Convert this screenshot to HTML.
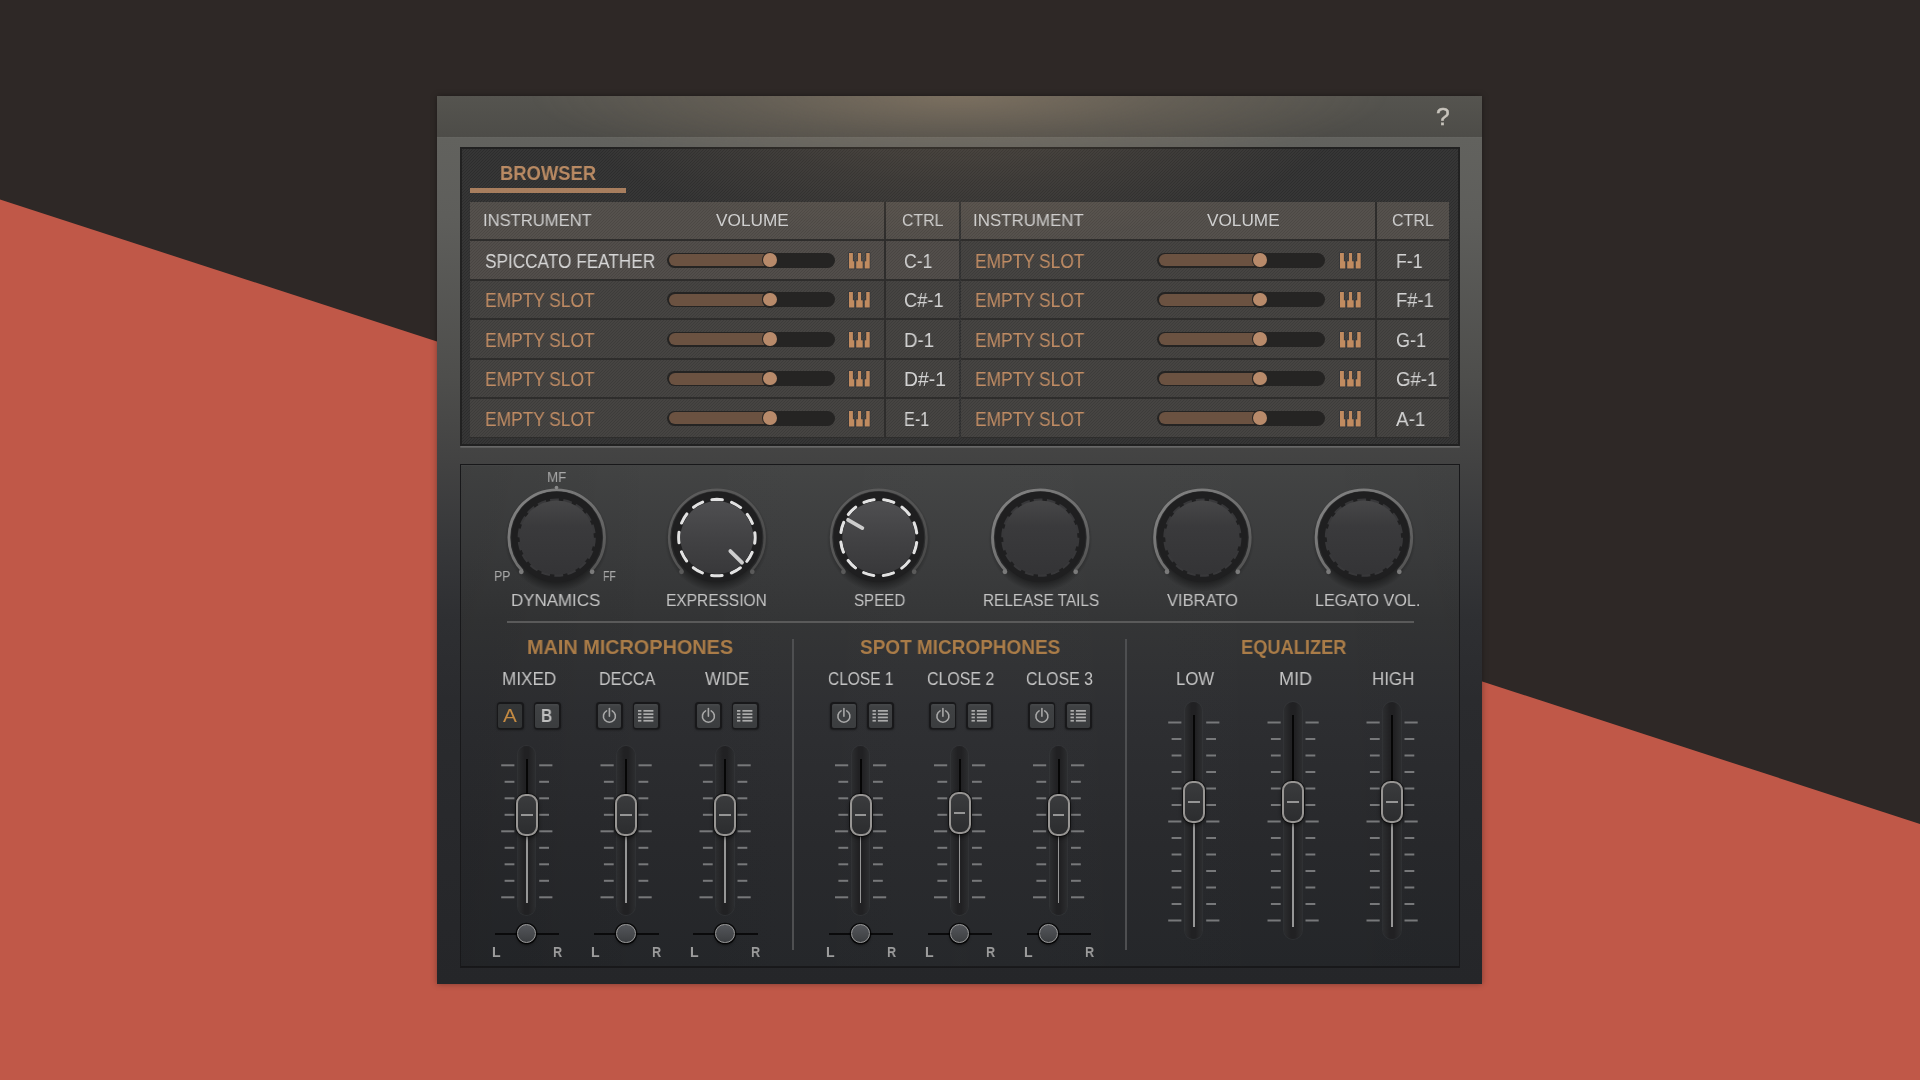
<!DOCTYPE html>
<html lang="en"><head><meta charset="utf-8"><title>Mixer</title>
<style>
html,body{margin:0;padding:0;}
body{width:1920px;height:1080px;overflow:hidden;background:#2e2826;position:relative;
font-family:"Liberation Sans",sans-serif;}
.a{position:absolute;}
.t{position:absolute;white-space:nowrap;line-height:30px;transform-origin:0 50%;will-change:transform;}
svg{position:absolute;overflow:visible;}
.stripe{background-image:linear-gradient(135deg,rgba(255,255,255,0.03) 25%,rgba(0,0,0,0.04) 25%,rgba(0,0,0,0.04) 50%,rgba(255,255,255,0.03) 50%,rgba(255,255,255,0.03) 75%,rgba(0,0,0,0.04) 75%);background-size:3px 3px;}
</style></head><body>

<svg class="a" style="left:0;top:0" width="1920" height="1080"><polygon points="0,199.5 1920,823.9 1920,1080 0,1080" fill="#c05848"/></svg>
<div class="a" id="panel" style="left:437px;top:96px;width:1045px;height:887.6px;background:linear-gradient(to bottom,#575651 0,#575651 40px,#6a6a66 40.5px,#62625e 42px,#5e5e5b 120px,#4e4e4c 280px,#424242 369px,#37383a 445px,#2e2f32 524px,#2a2b2e 604px,#252629 888px);box-shadow:0 0 6px rgba(0,0,0,0.35);"></div>
<div class="a" style="left:437px;top:96px;width:1045px;height:40.5px;background:linear-gradient(to bottom,#55544f,#4d4c48);"></div>
<div class="t" style="left:1435.60px;top:102.18px;font-size:24.01px;color:#c8c4bc;transform:scaleX(1.0277);-webkit-text-stroke:0.45px #c8c4bc;">?</div>
<div class="a" style="left:437px;top:96px;width:1045px;height:260px;background:radial-gradient(ellipse 430px 78px at 50% 0,rgba(190,160,125,0.36),rgba(190,160,125,0.15) 50%,rgba(190,160,125,0) 100%);"></div>
<div class="a stripe" style="left:460px;top:147px;width:999.5px;height:298.5px;box-sizing:border-box;background-color:#2f2f2f;border:2px solid #212121;box-shadow:0 2px 0 -0.3px rgba(255,255,255,0.19);"></div>
<div class="t" style="left:499.81px;top:158.16px;font-size:19.75px;color:#b98a63;font-weight:bold;transform:scaleX(0.9304);">BROWSER</div>
<div class="a" style="left:470px;top:188.3px;width:156px;height:5.2px;background:#a87e5e;"></div>
<div class="a" style="left:470px;top:202px;width:488.6px;height:235.5px;background:#2e2d2c;"></div>
<div class="a stripe" style="left:470px;top:202px;width:414px;height:37.19999999999999px;background-color:#4f4b47;"></div>
<div class="a stripe" style="left:470px;top:241.20px;width:414px;height:37.5px;background-color:#4c4845;"></div>
<div class="a stripe" style="left:470px;top:280.70px;width:414px;height:37.5px;background-color:#403e3c;"></div>
<div class="a stripe" style="left:470px;top:320.20px;width:414px;height:37.5px;background-color:#403e3c;"></div>
<div class="a stripe" style="left:470px;top:359.70px;width:414px;height:37.5px;background-color:#403e3c;"></div>
<div class="a stripe" style="left:470px;top:399.20px;width:414px;height:37.5px;background-color:#403e3c;"></div>
<div class="a stripe" style="left:886px;top:202px;width:72.60000000000002px;height:37.19999999999999px;background-color:#4f4b47;"></div>
<div class="a stripe" style="left:886px;top:241.20px;width:72.60000000000002px;height:37.5px;background-color:#4c4845;"></div>
<div class="a stripe" style="left:886px;top:280.70px;width:72.60000000000002px;height:37.5px;background-color:#403e3c;"></div>
<div class="a stripe" style="left:886px;top:320.20px;width:72.60000000000002px;height:37.5px;background-color:#403e3c;"></div>
<div class="a stripe" style="left:886px;top:359.70px;width:72.60000000000002px;height:37.5px;background-color:#403e3c;"></div>
<div class="a stripe" style="left:886px;top:399.20px;width:72.60000000000002px;height:37.5px;background-color:#403e3c;"></div>
<div class="a" style="left:960.6px;top:202px;width:488.4px;height:235.5px;background:#2e2d2c;"></div>
<div class="a stripe" style="left:960.6px;top:202px;width:414.1px;height:37.19999999999999px;background-color:#4f4b47;"></div>
<div class="a stripe" style="left:960.6px;top:241.20px;width:414.1px;height:37.5px;background-color:#403e3c;"></div>
<div class="a stripe" style="left:960.6px;top:280.70px;width:414.1px;height:37.5px;background-color:#403e3c;"></div>
<div class="a stripe" style="left:960.6px;top:320.20px;width:414.1px;height:37.5px;background-color:#403e3c;"></div>
<div class="a stripe" style="left:960.6px;top:359.70px;width:414.1px;height:37.5px;background-color:#403e3c;"></div>
<div class="a stripe" style="left:960.6px;top:399.20px;width:414.1px;height:37.5px;background-color:#403e3c;"></div>
<div class="a stripe" style="left:1376.7px;top:202px;width:72.29999999999995px;height:37.19999999999999px;background-color:#4f4b47;"></div>
<div class="a stripe" style="left:1376.7px;top:241.20px;width:72.29999999999995px;height:37.5px;background-color:#403e3c;"></div>
<div class="a stripe" style="left:1376.7px;top:280.70px;width:72.29999999999995px;height:37.5px;background-color:#403e3c;"></div>
<div class="a stripe" style="left:1376.7px;top:320.20px;width:72.29999999999995px;height:37.5px;background-color:#403e3c;"></div>
<div class="a stripe" style="left:1376.7px;top:359.70px;width:72.29999999999995px;height:37.5px;background-color:#403e3c;"></div>
<div class="a stripe" style="left:1376.7px;top:399.20px;width:72.29999999999995px;height:37.5px;background-color:#403e3c;"></div>
<div class="t" style="left:482.90px;top:205.71px;font-size:17.01px;color:#cfcfcf;transform:scaleX(0.9763);">INSTRUMENT</div>
<div class="t" style="left:972.65px;top:205.71px;font-size:17.01px;color:#cfcfcf;transform:scaleX(0.9942);">INSTRUMENT</div>
<div class="t" style="left:716.35px;top:205.71px;font-size:17.01px;color:#cfcfcf;transform:scaleX(1.0143);">VOLUME</div>
<div class="t" style="left:1206.85px;top:205.71px;font-size:17.01px;color:#cfcfcf;transform:scaleX(1.0115);">VOLUME</div>
<div class="t" style="left:901.65px;top:205.71px;font-size:17.01px;color:#cfcfcf;transform:scaleX(0.9312);">CTRL</div>
<div class="t" style="left:1391.85px;top:205.71px;font-size:17.01px;color:#cfcfcf;transform:scaleX(0.9402);">CTRL</div>
<div class="t" style="left:484.63px;top:245.85px;font-size:19.34px;color:#d6d6d6;transform:scaleX(0.8905);">SPICCATO FEATHER</div>
<div class="t" style="left:974.73px;top:245.85px;font-size:19.34px;color:#c08c64;transform:scaleX(0.8958);">EMPTY SLOT</div>
<div class="a" style="left:667px;top:252.60px;width:168.0px;height:15.0px;border-radius:8px;background:#252423;"></div>
<div class="a" style="left:668.5px;top:254.10px;width:103.0px;height:12.0px;border-radius:6px;background:#6b5241;"></div>
<div class="a" style="left:761.80px;top:251.90px;width:16.4px;height:16.4px;border-radius:50%;background:#262423;"></div>
<div class="a" style="left:763.10px;top:253.20px;width:13.8px;height:13.8px;border-radius:50%;background:#b88a6a;"></div>
<div class="a" style="left:1157.2px;top:252.60px;width:168.0px;height:15.0px;border-radius:8px;background:#252423;"></div>
<div class="a" style="left:1158.7px;top:254.10px;width:103.0px;height:12.0px;border-radius:6px;background:#6b5241;"></div>
<div class="a" style="left:1252.00px;top:251.90px;width:16.4px;height:16.4px;border-radius:50%;background:#262423;"></div>
<div class="a" style="left:1253.30px;top:253.20px;width:13.8px;height:13.8px;border-radius:50%;background:#b88a6a;"></div>
<svg style="left:849.4000000000001px;top:252.65px" width="21" height="16" viewBox="0 0 21 16"><g fill="#c08b60" stroke="#2f3338" stroke-opacity="0.85" stroke-width="1.3" paint-order="stroke" stroke-linejoin="round"><path d="M0,0 h3.9 v8.3 h1.4 v7.3 h-5.3 z"/><path d="M8.9,0 h3.2 v8.3 h1.6 v7.3 h-6.5 v-7.3 h1.7 z"/><path d="M17.2,0 h3.5 v15.6 h-5 v-7.3 h1.5 z"/></g></svg>
<svg style="left:1339.6000000000001px;top:252.65px" width="21" height="16" viewBox="0 0 21 16"><g fill="#c08b60" stroke="#2f3338" stroke-opacity="0.85" stroke-width="1.3" paint-order="stroke" stroke-linejoin="round"><path d="M0,0 h3.9 v8.3 h1.4 v7.3 h-5.3 z"/><path d="M8.9,0 h3.2 v8.3 h1.6 v7.3 h-6.5 v-7.3 h1.7 z"/><path d="M17.2,0 h3.5 v15.6 h-5 v-7.3 h1.5 z"/></g></svg>
<div class="t" style="left:904.00px;top:245.85px;font-size:19.34px;color:#d2d2d2;transform:scaleX(0.9080);">C-1</div>
<div class="t" style="left:1396.00px;top:245.85px;font-size:19.34px;color:#d2d2d2;transform:scaleX(0.9168);">F-1</div>
<div class="t" style="left:484.63px;top:285.35px;font-size:19.34px;color:#c08c64;transform:scaleX(0.8979);">EMPTY SLOT</div>
<div class="t" style="left:974.73px;top:285.35px;font-size:19.34px;color:#c08c64;transform:scaleX(0.8958);">EMPTY SLOT</div>
<div class="a" style="left:667px;top:292.10px;width:168.0px;height:15.0px;border-radius:8px;background:#252423;"></div>
<div class="a" style="left:668.5px;top:293.60px;width:103.0px;height:12.0px;border-radius:6px;background:#6b5241;"></div>
<div class="a" style="left:761.80px;top:291.40px;width:16.4px;height:16.4px;border-radius:50%;background:#262423;"></div>
<div class="a" style="left:763.10px;top:292.70px;width:13.8px;height:13.8px;border-radius:50%;background:#b88a6a;"></div>
<div class="a" style="left:1157.2px;top:292.10px;width:168.0px;height:15.0px;border-radius:8px;background:#252423;"></div>
<div class="a" style="left:1158.7px;top:293.60px;width:103.0px;height:12.0px;border-radius:6px;background:#6b5241;"></div>
<div class="a" style="left:1252.00px;top:291.40px;width:16.4px;height:16.4px;border-radius:50%;background:#262423;"></div>
<div class="a" style="left:1253.30px;top:292.70px;width:13.8px;height:13.8px;border-radius:50%;background:#b88a6a;"></div>
<svg style="left:849.4000000000001px;top:292.15px" width="21" height="16" viewBox="0 0 21 16"><g fill="#c08b60" stroke="#2f3338" stroke-opacity="0.85" stroke-width="1.3" paint-order="stroke" stroke-linejoin="round"><path d="M0,0 h3.9 v8.3 h1.4 v7.3 h-5.3 z"/><path d="M8.9,0 h3.2 v8.3 h1.6 v7.3 h-6.5 v-7.3 h1.7 z"/><path d="M17.2,0 h3.5 v15.6 h-5 v-7.3 h1.5 z"/></g></svg>
<svg style="left:1339.6000000000001px;top:292.15px" width="21" height="16" viewBox="0 0 21 16"><g fill="#c08b60" stroke="#2f3338" stroke-opacity="0.85" stroke-width="1.3" paint-order="stroke" stroke-linejoin="round"><path d="M0,0 h3.9 v8.3 h1.4 v7.3 h-5.3 z"/><path d="M8.9,0 h3.2 v8.3 h1.6 v7.3 h-6.5 v-7.3 h1.7 z"/><path d="M17.2,0 h3.5 v15.6 h-5 v-7.3 h1.5 z"/></g></svg>
<div class="t" style="left:904.00px;top:285.35px;font-size:19.34px;color:#d2d2d2;transform:scaleX(0.9422);">C#-1</div>
<div class="t" style="left:1396.00px;top:285.35px;font-size:19.34px;color:#d2d2d2;transform:scaleX(0.9530);">F#-1</div>
<div class="t" style="left:484.63px;top:324.85px;font-size:19.34px;color:#c08c64;transform:scaleX(0.8979);">EMPTY SLOT</div>
<div class="t" style="left:974.73px;top:324.85px;font-size:19.34px;color:#c08c64;transform:scaleX(0.8958);">EMPTY SLOT</div>
<div class="a" style="left:667px;top:331.60px;width:168.0px;height:15.0px;border-radius:8px;background:#252423;"></div>
<div class="a" style="left:668.5px;top:333.10px;width:103.0px;height:12.0px;border-radius:6px;background:#6b5241;"></div>
<div class="a" style="left:761.80px;top:330.90px;width:16.4px;height:16.4px;border-radius:50%;background:#262423;"></div>
<div class="a" style="left:763.10px;top:332.20px;width:13.8px;height:13.8px;border-radius:50%;background:#b88a6a;"></div>
<div class="a" style="left:1157.2px;top:331.60px;width:168.0px;height:15.0px;border-radius:8px;background:#252423;"></div>
<div class="a" style="left:1158.7px;top:333.10px;width:103.0px;height:12.0px;border-radius:6px;background:#6b5241;"></div>
<div class="a" style="left:1252.00px;top:330.90px;width:16.4px;height:16.4px;border-radius:50%;background:#262423;"></div>
<div class="a" style="left:1253.30px;top:332.20px;width:13.8px;height:13.8px;border-radius:50%;background:#b88a6a;"></div>
<svg style="left:849.4000000000001px;top:331.65px" width="21" height="16" viewBox="0 0 21 16"><g fill="#c08b60" stroke="#2f3338" stroke-opacity="0.85" stroke-width="1.3" paint-order="stroke" stroke-linejoin="round"><path d="M0,0 h3.9 v8.3 h1.4 v7.3 h-5.3 z"/><path d="M8.9,0 h3.2 v8.3 h1.6 v7.3 h-6.5 v-7.3 h1.7 z"/><path d="M17.2,0 h3.5 v15.6 h-5 v-7.3 h1.5 z"/></g></svg>
<svg style="left:1339.6000000000001px;top:331.65px" width="21" height="16" viewBox="0 0 21 16"><g fill="#c08b60" stroke="#2f3338" stroke-opacity="0.85" stroke-width="1.3" paint-order="stroke" stroke-linejoin="round"><path d="M0,0 h3.9 v8.3 h1.4 v7.3 h-5.3 z"/><path d="M8.9,0 h3.2 v8.3 h1.6 v7.3 h-6.5 v-7.3 h1.7 z"/><path d="M17.2,0 h3.5 v15.6 h-5 v-7.3 h1.5 z"/></g></svg>
<div class="t" style="left:904.00px;top:324.85px;font-size:19.34px;color:#d2d2d2;transform:scaleX(0.9626);">D-1</div>
<div class="t" style="left:1396.00px;top:324.85px;font-size:19.34px;color:#d2d2d2;transform:scaleX(0.9335);">G-1</div>
<div class="t" style="left:484.63px;top:364.35px;font-size:19.34px;color:#c08c64;transform:scaleX(0.8979);">EMPTY SLOT</div>
<div class="t" style="left:974.73px;top:364.35px;font-size:19.34px;color:#c08c64;transform:scaleX(0.8958);">EMPTY SLOT</div>
<div class="a" style="left:667px;top:371.10px;width:168.0px;height:15.0px;border-radius:8px;background:#252423;"></div>
<div class="a" style="left:668.5px;top:372.60px;width:103.0px;height:12.0px;border-radius:6px;background:#6b5241;"></div>
<div class="a" style="left:761.80px;top:370.40px;width:16.4px;height:16.4px;border-radius:50%;background:#262423;"></div>
<div class="a" style="left:763.10px;top:371.70px;width:13.8px;height:13.8px;border-radius:50%;background:#b88a6a;"></div>
<div class="a" style="left:1157.2px;top:371.10px;width:168.0px;height:15.0px;border-radius:8px;background:#252423;"></div>
<div class="a" style="left:1158.7px;top:372.60px;width:103.0px;height:12.0px;border-radius:6px;background:#6b5241;"></div>
<div class="a" style="left:1252.00px;top:370.40px;width:16.4px;height:16.4px;border-radius:50%;background:#262423;"></div>
<div class="a" style="left:1253.30px;top:371.70px;width:13.8px;height:13.8px;border-radius:50%;background:#b88a6a;"></div>
<svg style="left:849.4000000000001px;top:371.15px" width="21" height="16" viewBox="0 0 21 16"><g fill="#c08b60" stroke="#2f3338" stroke-opacity="0.85" stroke-width="1.3" paint-order="stroke" stroke-linejoin="round"><path d="M0,0 h3.9 v8.3 h1.4 v7.3 h-5.3 z"/><path d="M8.9,0 h3.2 v8.3 h1.6 v7.3 h-6.5 v-7.3 h1.7 z"/><path d="M17.2,0 h3.5 v15.6 h-5 v-7.3 h1.5 z"/></g></svg>
<svg style="left:1339.6000000000001px;top:371.15px" width="21" height="16" viewBox="0 0 21 16"><g fill="#c08b60" stroke="#2f3338" stroke-opacity="0.85" stroke-width="1.3" paint-order="stroke" stroke-linejoin="round"><path d="M0,0 h3.9 v8.3 h1.4 v7.3 h-5.3 z"/><path d="M8.9,0 h3.2 v8.3 h1.6 v7.3 h-6.5 v-7.3 h1.7 z"/><path d="M17.2,0 h3.5 v15.6 h-5 v-7.3 h1.5 z"/></g></svg>
<div class="t" style="left:904.00px;top:364.35px;font-size:19.34px;color:#d2d2d2;transform:scaleX(0.9899);">D#-1</div>
<div class="t" style="left:1396.00px;top:364.35px;font-size:19.34px;color:#d2d2d2;transform:scaleX(0.9628);">G#-1</div>
<div class="t" style="left:484.63px;top:403.85px;font-size:19.34px;color:#c08c64;transform:scaleX(0.8979);">EMPTY SLOT</div>
<div class="t" style="left:974.73px;top:403.85px;font-size:19.34px;color:#c08c64;transform:scaleX(0.8958);">EMPTY SLOT</div>
<div class="a" style="left:667px;top:410.60px;width:168.0px;height:15.0px;border-radius:8px;background:#252423;"></div>
<div class="a" style="left:668.5px;top:412.10px;width:103.0px;height:12.0px;border-radius:6px;background:#6b5241;"></div>
<div class="a" style="left:761.80px;top:409.90px;width:16.4px;height:16.4px;border-radius:50%;background:#262423;"></div>
<div class="a" style="left:763.10px;top:411.20px;width:13.8px;height:13.8px;border-radius:50%;background:#b88a6a;"></div>
<div class="a" style="left:1157.2px;top:410.60px;width:168.0px;height:15.0px;border-radius:8px;background:#252423;"></div>
<div class="a" style="left:1158.7px;top:412.10px;width:103.0px;height:12.0px;border-radius:6px;background:#6b5241;"></div>
<div class="a" style="left:1252.00px;top:409.90px;width:16.4px;height:16.4px;border-radius:50%;background:#262423;"></div>
<div class="a" style="left:1253.30px;top:411.20px;width:13.8px;height:13.8px;border-radius:50%;background:#b88a6a;"></div>
<svg style="left:849.4000000000001px;top:410.65px" width="21" height="16" viewBox="0 0 21 16"><g fill="#c08b60" stroke="#2f3338" stroke-opacity="0.85" stroke-width="1.3" paint-order="stroke" stroke-linejoin="round"><path d="M0,0 h3.9 v8.3 h1.4 v7.3 h-5.3 z"/><path d="M8.9,0 h3.2 v8.3 h1.6 v7.3 h-6.5 v-7.3 h1.7 z"/><path d="M17.2,0 h3.5 v15.6 h-5 v-7.3 h1.5 z"/></g></svg>
<svg style="left:1339.6000000000001px;top:410.65px" width="21" height="16" viewBox="0 0 21 16"><g fill="#c08b60" stroke="#2f3338" stroke-opacity="0.85" stroke-width="1.3" paint-order="stroke" stroke-linejoin="round"><path d="M0,0 h3.9 v8.3 h1.4 v7.3 h-5.3 z"/><path d="M8.9,0 h3.2 v8.3 h1.6 v7.3 h-6.5 v-7.3 h1.7 z"/><path d="M17.2,0 h3.5 v15.6 h-5 v-7.3 h1.5 z"/></g></svg>
<div class="t" style="left:904.00px;top:403.85px;font-size:19.34px;color:#d2d2d2;transform:scaleX(0.8405);">E-1</div>
<div class="t" style="left:1396.00px;top:403.85px;font-size:19.34px;color:#d2d2d2;transform:scaleX(0.9767);">A-1</div>
<div class="a" style="left:460px;top:147px;width:999.5px;height:120px;background:radial-gradient(ellipse 400px 150px at 50% -51px,rgba(200,165,125,0.20),rgba(200,165,125,0.07) 60%,rgba(200,165,125,0) 100%);"></div>
<div class="a" style="left:459.5px;top:464px;width:1000.5px;height:504px;box-sizing:border-box;border:1.5px solid #18181a;border-bottom-width:2px;background:linear-gradient(to bottom,#434444 0,#3a3b3c 90px,#333435 155px,#2d2e31 250px,#28292c 380px,#242629 503px);"></div>
<div class="a" style="left:461.0px;top:465.5px;width:997.5px;height:501px;background:linear-gradient(to right,rgba(0,0,0,0.07),rgba(0,0,0,0) 20%,rgba(255,255,255,0.012) 50%,rgba(0,0,0,0) 85%,rgba(0,0,0,0.03));"></div>
<svg class="a" style="left:0;top:0" width="1920" height="1080"><defs><linearGradient id="capA" x1="0" y1="0" x2="0" y2="1"><stop offset="0" stop-color="#474748"/><stop offset="0.35" stop-color="#3a3a3c"/><stop offset="1" stop-color="#343436"/></linearGradient><linearGradient id="capB" x1="0" y1="0" x2="0" y2="1"><stop offset="0" stop-color="#4f4f51"/><stop offset="0.5" stop-color="#424244"/><stop offset="1" stop-color="#38383a"/></linearGradient><linearGradient id="arcL" x1="0" y1="0" x2="1" y2="1"><stop offset="0" stop-color="#868686"/><stop offset="0.6" stop-color="#6c6c6c"/><stop offset="1" stop-color="#505050"/></linearGradient><linearGradient id="arcD" x1="0" y1="0" x2="1" y2="1"><stop offset="0" stop-color="#606060"/><stop offset="1" stop-color="#484848"/></linearGradient><radialGradient id="ksh" cx="0.5" cy="0.5" r="0.5"><stop offset="0.8" stop-color="#000" stop-opacity="0.45"/><stop offset="1" stop-color="#000" stop-opacity="0"/></radialGradient></defs>
<circle cx="556.7" cy="539.6" r="52" fill="url(#ksh)"/>
<path d="M522.32,570.80 A47.8,47.8 0 1 1 591.08,570.80" fill="none" stroke="url(#arcL)" stroke-width="2.8"/>
<circle cx="521.31" cy="571.78" r="2.4" fill="#7a7a7a"/>
<circle cx="592.09" cy="571.78" r="2.4" fill="#7a7a7a"/>
<circle cx="556.7" cy="536.8000000000001" r="45.3" fill="#1f1f20"/>
<circle cx="556.7" cy="537.6" r="37.8" fill="none" stroke="#38383a" stroke-width="2.6" stroke-dasharray="8.8 4.39" transform="rotate(-100 556.7 537.6)"/>
<circle cx="556.7" cy="537.6" r="37.2" fill="url(#capA)"/>
<circle cx="716.9" cy="539.6" r="52" fill="url(#ksh)"/>
<path d="M682.52,570.80 A47.8,47.8 0 1 1 751.28,570.80" fill="none" stroke="url(#arcD)" stroke-width="2.4"/>
<circle cx="681.51" cy="571.78" r="2.4" fill="#5a5a5a"/>
<circle cx="752.29" cy="571.78" r="2.4" fill="#5a5a5a"/>
<circle cx="716.9" cy="536.8000000000001" r="45.3" fill="#1f1f20"/>
<circle cx="716.9" cy="537.6" r="38.2" fill="none" stroke="#e2e2e2" stroke-width="3.1" stroke-linecap="round" stroke-dasharray="10.401 9.601" transform="rotate(52.20 716.9 537.6)"/>
<circle cx="716.9" cy="537.6" r="36.5" fill="url(#capB)"/>
<path d="M730.34,551.04 L742.00,562.70" stroke="#cdcdcd" stroke-width="3.8" stroke-linecap="round"/>
<circle cx="878.8" cy="539.6" r="52" fill="url(#ksh)"/>
<path d="M844.42,570.80 A47.8,47.8 0 1 1 913.18,570.80" fill="none" stroke="url(#arcD)" stroke-width="2.4"/>
<circle cx="843.41" cy="571.78" r="2.4" fill="#5a5a5a"/>
<circle cx="914.19" cy="571.78" r="2.4" fill="#5a5a5a"/>
<circle cx="878.8" cy="536.8000000000001" r="45.3" fill="#1f1f20"/>
<circle cx="878.8" cy="537.6" r="38.2" fill="none" stroke="#e2e2e2" stroke-width="3.1" stroke-linecap="round" stroke-dasharray="10.401 9.601" transform="rotate(-142.80 878.8 537.6)"/>
<circle cx="878.8" cy="537.6" r="36.5" fill="url(#capB)"/>
<path d="M862.35,528.10 L848.06,519.85" stroke="#cdcdcd" stroke-width="3.8" stroke-linecap="round"/>
<circle cx="1040.3" cy="539.6" r="52" fill="url(#ksh)"/>
<path d="M1005.92,570.80 A47.8,47.8 0 1 1 1074.68,570.80" fill="none" stroke="url(#arcL)" stroke-width="2.8"/>
<circle cx="1004.91" cy="571.78" r="2.4" fill="#7a7a7a"/>
<circle cx="1075.69" cy="571.78" r="2.4" fill="#7a7a7a"/>
<circle cx="1040.3" cy="536.8000000000001" r="45.3" fill="#1f1f20"/>
<circle cx="1040.3" cy="537.6" r="37.8" fill="none" stroke="#38383a" stroke-width="2.6" stroke-dasharray="8.8 4.39" transform="rotate(-100 1040.3 537.6)"/>
<circle cx="1040.3" cy="537.6" r="37.2" fill="url(#capA)"/>
<circle cx="1202.4" cy="539.6" r="52" fill="url(#ksh)"/>
<path d="M1168.02,570.80 A47.8,47.8 0 1 1 1236.78,570.80" fill="none" stroke="url(#arcL)" stroke-width="2.8"/>
<circle cx="1167.01" cy="571.78" r="2.4" fill="#7a7a7a"/>
<circle cx="1237.79" cy="571.78" r="2.4" fill="#7a7a7a"/>
<circle cx="1202.4" cy="536.8000000000001" r="45.3" fill="#1f1f20"/>
<circle cx="1202.4" cy="537.6" r="37.8" fill="none" stroke="#38383a" stroke-width="2.6" stroke-dasharray="8.8 4.39" transform="rotate(-100 1202.4 537.6)"/>
<circle cx="1202.4" cy="537.6" r="37.2" fill="url(#capA)"/>
<circle cx="1363.9" cy="539.6" r="52" fill="url(#ksh)"/>
<path d="M1329.52,570.80 A47.8,47.8 0 1 1 1398.28,570.80" fill="none" stroke="url(#arcL)" stroke-width="2.8"/>
<circle cx="1328.51" cy="571.78" r="2.4" fill="#7a7a7a"/>
<circle cx="1399.29" cy="571.78" r="2.4" fill="#7a7a7a"/>
<circle cx="1363.9" cy="536.8000000000001" r="45.3" fill="#1f1f20"/>
<circle cx="1363.9" cy="537.6" r="37.8" fill="none" stroke="#38383a" stroke-width="2.6" stroke-dasharray="8.8 4.39" transform="rotate(-100 1363.9 537.6)"/>
<circle cx="1363.9" cy="537.6" r="37.2" fill="url(#capA)"/>
<circle cx="556.5" cy="487.6" r="1.8" fill="#8a8a8a"/>
</svg>
<div class="t" style="left:511.43px;top:584.96px;font-size:17.42px;color:#c4c4c4;transform:scaleX(0.9721);">DYNAMICS</div>
<div class="t" style="left:665.53px;top:584.96px;font-size:17.42px;color:#c4c4c4;transform:scaleX(0.8907);">EXPRESSION</div>
<div class="t" style="left:853.63px;top:584.96px;font-size:17.42px;color:#c4c4c4;transform:scaleX(0.8685);">SPEED</div>
<div class="t" style="left:982.93px;top:584.96px;font-size:17.42px;color:#c4c4c4;transform:scaleX(0.8809);">RELEASE TAILS</div>
<div class="t" style="left:1167.13px;top:584.96px;font-size:17.42px;color:#c4c4c4;transform:scaleX(0.9483);">VIBRATO</div>
<div class="t" style="left:1314.73px;top:584.96px;font-size:17.42px;color:#c4c4c4;transform:scaleX(0.9277);">LEGATO VOL.</div>
<div class="t" style="left:546.88px;top:461.57px;font-size:14.81px;color:#a8a8a8;transform:scaleX(0.9048);">MF</div>
<div class="t" style="left:493.78px;top:560.81px;font-size:14.68px;color:#a8a8a8;transform:scaleX(0.8402);">PP</div>
<div class="t" style="left:602.98px;top:560.81px;font-size:14.68px;color:#a8a8a8;transform:scaleX(0.7167);">FF</div>
<div class="a" style="left:506.5px;top:621.0px;width:907.7px;height:1.6px;background:#5a5a5a;"></div>
<div class="a" style="left:792.2px;top:638.8px;width:1.6px;height:311px;background:#4e4f51;"></div>
<div class="a" style="left:1125.3px;top:638.8px;width:1.6px;height:311px;background:#4e4f51;"></div>
<div class="t" style="left:527.38px;top:632.32px;font-size:20.44px;color:#aa7c48;font-weight:bold;transform:scaleX(0.9707);">MAIN MICROPHONES</div>
<div class="t" style="left:860.18px;top:632.32px;font-size:20.44px;color:#aa7c48;font-weight:bold;transform:scaleX(0.9285);">SPOT MICROPHONES</div>
<div class="t" style="left:1241.28px;top:632.32px;font-size:20.44px;color:#aa7c48;font-weight:bold;transform:scaleX(0.8928);">EQUALIZER</div>
<div class="t" style="left:502.43px;top:664.28px;font-size:18.24px;color:#c4c4c4;transform:scaleX(0.9387);">MIXED</div>
<div class="t" style="left:599.03px;top:664.28px;font-size:18.24px;color:#c4c4c4;transform:scaleX(0.8806);">DECCA</div>
<div class="t" style="left:705.23px;top:664.28px;font-size:18.24px;color:#c4c4c4;transform:scaleX(0.9287);">WIDE</div>
<div class="t" style="left:827.73px;top:664.28px;font-size:18.24px;color:#c4c4c4;transform:scaleX(0.8491);">CLOSE 1</div>
<div class="t" style="left:927.03px;top:664.28px;font-size:18.24px;color:#c4c4c4;transform:scaleX(0.8725);">CLOSE 2</div>
<div class="t" style="left:1025.73px;top:664.28px;font-size:18.24px;color:#c4c4c4;transform:scaleX(0.8673);">CLOSE 3</div>
<div class="t" style="left:1175.53px;top:664.28px;font-size:18.24px;color:#c4c4c4;transform:scaleX(0.9177);">LOW</div>
<div class="t" style="left:1279.03px;top:664.28px;font-size:18.24px;color:#c4c4c4;transform:scaleX(0.9849);">MID</div>
<div class="t" style="left:1371.53px;top:664.28px;font-size:18.24px;color:#c4c4c4;transform:scaleX(0.9261);">HIGH</div>
<div class="a" style="left:496.8px;top:702.0px;width:27px;height:27.2px;border-radius:3.5px;background:#18181a;box-shadow:0 1px 2px rgba(0,0,0,0.5);"></div>
<div class="a" style="left:498.40000000000003px;top:703.6px;width:23.8px;height:24px;border-radius:2px;background:linear-gradient(to bottom,#343637,#323435);"></div>
<div class="t" style="left:503.20px;top:700.67px;font-size:17.97px;color:#c48a42;transform:scaleX(1.1544);">A</div>
<div class="a" style="left:533.5px;top:702.0px;width:27px;height:27.2px;border-radius:3.5px;background:#18181a;box-shadow:0 1px 2px rgba(0,0,0,0.5);"></div>
<div class="a" style="left:535.1px;top:703.6px;width:23.8px;height:24px;border-radius:2px;background:linear-gradient(to bottom,#47494b 0,#3f4143 12%,#3b3d3f 100%);"></div>
<div class="t" style="left:541.20px;top:700.67px;font-size:17.97px;color:#bebebe;font-weight:bold;transform:scaleX(0.8659);">B</div>
<div class="a" style="left:595.9px;top:702.0px;width:27px;height:27.2px;border-radius:3.5px;background:#18181a;box-shadow:0 1px 2px rgba(0,0,0,0.5);"></div>
<div class="a" style="left:597.5px;top:703.6px;width:23.8px;height:24px;border-radius:2px;background:linear-gradient(to bottom,#47494b 0,#3f4143 12%,#3b3d3f 100%);"></div>
<svg style="left:0;top:0" width="1" height="1"><g fill="none" stroke="#a8a8a8" stroke-width="1.6" stroke-linecap="round"><path d="M606.58,710.90 A6.0,6.0 0 1 0 612.22,710.90"/><path d="M609.40,708.60 V716.20"/></g></svg>
<div class="a" style="left:632.5px;top:702.0px;width:27px;height:27.2px;border-radius:3.5px;background:#18181a;box-shadow:0 1px 2px rgba(0,0,0,0.5);"></div>
<div class="a" style="left:634.1px;top:703.6px;width:23.8px;height:24px;border-radius:2px;background:linear-gradient(to bottom,#47494b 0,#3f4143 12%,#3b3d3f 100%);"></div>
<svg style="left:0;top:0" width="1" height="1"><g fill="#acacac"><rect x="638.00" y="710.00" width="3.4" height="1.7"/><rect x="643.40" y="710.00" width="10" height="1.7"/><rect x="638.00" y="713.30" width="3.4" height="1.7"/><rect x="643.40" y="713.30" width="10" height="1.7"/><rect x="638.00" y="716.60" width="3.4" height="1.7"/><rect x="643.40" y="716.60" width="10" height="1.7"/><rect x="638.00" y="719.90" width="3.4" height="1.7"/><rect x="643.40" y="719.90" width="10" height="1.7"/></g></svg>
<div class="a" style="left:694.9px;top:702.0px;width:27px;height:27.2px;border-radius:3.5px;background:#18181a;box-shadow:0 1px 2px rgba(0,0,0,0.5);"></div>
<div class="a" style="left:696.5px;top:703.6px;width:23.8px;height:24px;border-radius:2px;background:linear-gradient(to bottom,#47494b 0,#3f4143 12%,#3b3d3f 100%);"></div>
<svg style="left:0;top:0" width="1" height="1"><g fill="none" stroke="#a8a8a8" stroke-width="1.6" stroke-linecap="round"><path d="M705.58,710.90 A6.0,6.0 0 1 0 711.22,710.90"/><path d="M708.40,708.60 V716.20"/></g></svg>
<div class="a" style="left:731.5px;top:702.0px;width:27px;height:27.2px;border-radius:3.5px;background:#18181a;box-shadow:0 1px 2px rgba(0,0,0,0.5);"></div>
<div class="a" style="left:733.1px;top:703.6px;width:23.8px;height:24px;border-radius:2px;background:linear-gradient(to bottom,#47494b 0,#3f4143 12%,#3b3d3f 100%);"></div>
<svg style="left:0;top:0" width="1" height="1"><g fill="#acacac"><rect x="737.00" y="710.00" width="3.4" height="1.7"/><rect x="742.40" y="710.00" width="10" height="1.7"/><rect x="737.00" y="713.30" width="3.4" height="1.7"/><rect x="742.40" y="713.30" width="10" height="1.7"/><rect x="737.00" y="716.60" width="3.4" height="1.7"/><rect x="742.40" y="716.60" width="10" height="1.7"/><rect x="737.00" y="719.90" width="3.4" height="1.7"/><rect x="742.40" y="719.90" width="10" height="1.7"/></g></svg>
<div class="a" style="left:830.4px;top:702.0px;width:27px;height:27.2px;border-radius:3.5px;background:#18181a;box-shadow:0 1px 2px rgba(0,0,0,0.5);"></div>
<div class="a" style="left:832.0px;top:703.6px;width:23.8px;height:24px;border-radius:2px;background:linear-gradient(to bottom,#47494b 0,#3f4143 12%,#3b3d3f 100%);"></div>
<svg style="left:0;top:0" width="1" height="1"><g fill="none" stroke="#a8a8a8" stroke-width="1.6" stroke-linecap="round"><path d="M841.08,710.90 A6.0,6.0 0 1 0 846.72,710.90"/><path d="M843.90,708.60 V716.20"/></g></svg>
<div class="a" style="left:867.0px;top:702.0px;width:27px;height:27.2px;border-radius:3.5px;background:#18181a;box-shadow:0 1px 2px rgba(0,0,0,0.5);"></div>
<div class="a" style="left:868.6px;top:703.6px;width:23.8px;height:24px;border-radius:2px;background:linear-gradient(to bottom,#47494b 0,#3f4143 12%,#3b3d3f 100%);"></div>
<svg style="left:0;top:0" width="1" height="1"><g fill="#acacac"><rect x="872.50" y="710.00" width="3.4" height="1.7"/><rect x="877.90" y="710.00" width="10" height="1.7"/><rect x="872.50" y="713.30" width="3.4" height="1.7"/><rect x="877.90" y="713.30" width="10" height="1.7"/><rect x="872.50" y="716.60" width="3.4" height="1.7"/><rect x="877.90" y="716.60" width="10" height="1.7"/><rect x="872.50" y="719.90" width="3.4" height="1.7"/><rect x="877.90" y="719.90" width="10" height="1.7"/></g></svg>
<div class="a" style="left:929.4px;top:702.0px;width:27px;height:27.2px;border-radius:3.5px;background:#18181a;box-shadow:0 1px 2px rgba(0,0,0,0.5);"></div>
<div class="a" style="left:931.0px;top:703.6px;width:23.8px;height:24px;border-radius:2px;background:linear-gradient(to bottom,#47494b 0,#3f4143 12%,#3b3d3f 100%);"></div>
<svg style="left:0;top:0" width="1" height="1"><g fill="none" stroke="#a8a8a8" stroke-width="1.6" stroke-linecap="round"><path d="M940.08,710.90 A6.0,6.0 0 1 0 945.72,710.90"/><path d="M942.90,708.60 V716.20"/></g></svg>
<div class="a" style="left:966.0px;top:702.0px;width:27px;height:27.2px;border-radius:3.5px;background:#18181a;box-shadow:0 1px 2px rgba(0,0,0,0.5);"></div>
<div class="a" style="left:967.6px;top:703.6px;width:23.8px;height:24px;border-radius:2px;background:linear-gradient(to bottom,#47494b 0,#3f4143 12%,#3b3d3f 100%);"></div>
<svg style="left:0;top:0" width="1" height="1"><g fill="#acacac"><rect x="971.50" y="710.00" width="3.4" height="1.7"/><rect x="976.90" y="710.00" width="10" height="1.7"/><rect x="971.50" y="713.30" width="3.4" height="1.7"/><rect x="976.90" y="713.30" width="10" height="1.7"/><rect x="971.50" y="716.60" width="3.4" height="1.7"/><rect x="976.90" y="716.60" width="10" height="1.7"/><rect x="971.50" y="719.90" width="3.4" height="1.7"/><rect x="976.90" y="719.90" width="10" height="1.7"/></g></svg>
<div class="a" style="left:1028.4px;top:702.0px;width:27px;height:27.2px;border-radius:3.5px;background:#18181a;box-shadow:0 1px 2px rgba(0,0,0,0.5);"></div>
<div class="a" style="left:1030.0px;top:703.6px;width:23.8px;height:24px;border-radius:2px;background:linear-gradient(to bottom,#47494b 0,#3f4143 12%,#3b3d3f 100%);"></div>
<svg style="left:0;top:0" width="1" height="1"><g fill="none" stroke="#a8a8a8" stroke-width="1.6" stroke-linecap="round"><path d="M1039.08,710.90 A6.0,6.0 0 1 0 1044.72,710.90"/><path d="M1041.90,708.60 V716.20"/></g></svg>
<div class="a" style="left:1065.0px;top:702.0px;width:27px;height:27.2px;border-radius:3.5px;background:#18181a;box-shadow:0 1px 2px rgba(0,0,0,0.5);"></div>
<div class="a" style="left:1066.6px;top:703.6px;width:23.8px;height:24px;border-radius:2px;background:linear-gradient(to bottom,#47494b 0,#3f4143 12%,#3b3d3f 100%);"></div>
<svg style="left:0;top:0" width="1" height="1"><g fill="#acacac"><rect x="1070.50" y="710.00" width="3.4" height="1.7"/><rect x="1075.90" y="710.00" width="10" height="1.7"/><rect x="1070.50" y="713.30" width="3.4" height="1.7"/><rect x="1075.90" y="713.30" width="10" height="1.7"/><rect x="1070.50" y="716.60" width="3.4" height="1.7"/><rect x="1075.90" y="716.60" width="10" height="1.7"/><rect x="1070.50" y="719.90" width="3.4" height="1.7"/><rect x="1075.90" y="719.90" width="10" height="1.7"/></g></svg>
<div class="a" style="left:517.90px;top:745.8px;width:17.6px;height:169.5px;border-radius:9px;background:linear-gradient(to right,#2c2d2f,#212123 38%,#212123 62%,#2c2d2f);box-shadow:0 0 0 1px rgba(58,59,62,0.45);"></div>
<div class="a" style="left:525.70px;top:759.3px;width:2px;height:55.30px;background:#060606;"></div>
<div class="a" style="left:525.80px;top:814.6px;width:1.8px;height:88.70px;background:#969696;"></div>
<svg style="left:0;top:0" width="1" height="1"><g fill="#77787a"><rect x="501.20" y="764.30" width="13.2" height="2"/><rect x="539.20" y="764.30" width="13.2" height="2"/><rect x="504.60" y="780.80" width="9.8" height="2"/><rect x="539.20" y="780.80" width="9.8" height="2"/><rect x="504.60" y="797.30" width="9.8" height="2"/><rect x="539.20" y="797.30" width="9.8" height="2"/><rect x="504.60" y="813.80" width="9.8" height="2"/><rect x="539.20" y="813.80" width="9.8" height="2"/><rect x="501.20" y="830.30" width="13.2" height="2"/><rect x="539.20" y="830.30" width="13.2" height="2"/><rect x="504.60" y="846.80" width="9.8" height="2"/><rect x="539.20" y="846.80" width="9.8" height="2"/><rect x="504.60" y="863.30" width="9.8" height="2"/><rect x="539.20" y="863.30" width="9.8" height="2"/><rect x="504.60" y="879.80" width="9.8" height="2"/><rect x="539.20" y="879.80" width="9.8" height="2"/><rect x="501.20" y="896.30" width="13.2" height="2"/><rect x="539.20" y="896.30" width="13.2" height="2"/></g></svg>
<div class="a" style="left:515.70px;top:793.60px;width:22px;height:42px;box-sizing:border-box;border-radius:9.5px;border:2px solid #979593;background:linear-gradient(to bottom,#3a3b3d,#2c2d2f);box-shadow:0 2px 4px rgba(0,0,0,0.6),0 0 0 1px rgba(0,0,0,0.5);"></div>
<div class="a" style="left:521.00px;top:813.50px;width:11.6px;height:2.2px;background:#959595;"></div>
<div class="a" style="left:494.70px;top:932.50px;width:64.5px;height:2px;background:#0a0a0b;"></div>
<div class="a" style="left:517.10px;top:923.90px;width:19.2px;height:19.2px;box-sizing:border-box;border-radius:50%;border:1.8px solid #9a9a9a;background:linear-gradient(to bottom,#54565a,#3c3e41);box-shadow:0 0 0 1.3px rgba(0,0,0,0.75),0 2px 3px rgba(0,0,0,0.6);"></div>
<div class="t" style="left:491.79px;top:936.50px;font-size:14.13px;color:#9c9c9c;font-weight:bold;transform:scaleX(0.9768);">L</div>
<div class="t" style="left:552.79px;top:936.50px;font-size:14.13px;color:#9c9c9c;font-weight:bold;transform:scaleX(0.8948);">R</div>
<div class="a" style="left:617.20px;top:745.8px;width:17.6px;height:169.5px;border-radius:9px;background:linear-gradient(to right,#2c2d2f,#212123 38%,#212123 62%,#2c2d2f);box-shadow:0 0 0 1px rgba(58,59,62,0.45);"></div>
<div class="a" style="left:625.00px;top:759.3px;width:2px;height:55.30px;background:#060606;"></div>
<div class="a" style="left:625.10px;top:814.6px;width:1.8px;height:88.70px;background:#969696;"></div>
<svg style="left:0;top:0" width="1" height="1"><g fill="#77787a"><rect x="600.50" y="764.30" width="13.2" height="2"/><rect x="638.50" y="764.30" width="13.2" height="2"/><rect x="603.90" y="780.80" width="9.8" height="2"/><rect x="638.50" y="780.80" width="9.8" height="2"/><rect x="603.90" y="797.30" width="9.8" height="2"/><rect x="638.50" y="797.30" width="9.8" height="2"/><rect x="603.90" y="813.80" width="9.8" height="2"/><rect x="638.50" y="813.80" width="9.8" height="2"/><rect x="600.50" y="830.30" width="13.2" height="2"/><rect x="638.50" y="830.30" width="13.2" height="2"/><rect x="603.90" y="846.80" width="9.8" height="2"/><rect x="638.50" y="846.80" width="9.8" height="2"/><rect x="603.90" y="863.30" width="9.8" height="2"/><rect x="638.50" y="863.30" width="9.8" height="2"/><rect x="603.90" y="879.80" width="9.8" height="2"/><rect x="638.50" y="879.80" width="9.8" height="2"/><rect x="600.50" y="896.30" width="13.2" height="2"/><rect x="638.50" y="896.30" width="13.2" height="2"/></g></svg>
<div class="a" style="left:615.00px;top:793.60px;width:22px;height:42px;box-sizing:border-box;border-radius:9.5px;border:2px solid #979593;background:linear-gradient(to bottom,#3a3b3d,#2c2d2f);box-shadow:0 2px 4px rgba(0,0,0,0.6),0 0 0 1px rgba(0,0,0,0.5);"></div>
<div class="a" style="left:620.30px;top:813.50px;width:11.6px;height:2.2px;background:#959595;"></div>
<div class="a" style="left:594.00px;top:932.50px;width:64.5px;height:2px;background:#0a0a0b;"></div>
<div class="a" style="left:616.40px;top:923.90px;width:19.2px;height:19.2px;box-sizing:border-box;border-radius:50%;border:1.8px solid #9a9a9a;background:linear-gradient(to bottom,#54565a,#3c3e41);box-shadow:0 0 0 1.3px rgba(0,0,0,0.75),0 2px 3px rgba(0,0,0,0.6);"></div>
<div class="t" style="left:591.09px;top:936.50px;font-size:14.13px;color:#9c9c9c;font-weight:bold;transform:scaleX(0.9768);">L</div>
<div class="t" style="left:652.09px;top:936.50px;font-size:14.13px;color:#9c9c9c;font-weight:bold;transform:scaleX(0.8948);">R</div>
<div class="a" style="left:716.20px;top:745.8px;width:17.6px;height:169.5px;border-radius:9px;background:linear-gradient(to right,#2c2d2f,#212123 38%,#212123 62%,#2c2d2f);box-shadow:0 0 0 1px rgba(58,59,62,0.45);"></div>
<div class="a" style="left:724.00px;top:759.3px;width:2px;height:55.30px;background:#060606;"></div>
<div class="a" style="left:724.10px;top:814.6px;width:1.8px;height:88.70px;background:#969696;"></div>
<svg style="left:0;top:0" width="1" height="1"><g fill="#77787a"><rect x="699.50" y="764.30" width="13.2" height="2"/><rect x="737.50" y="764.30" width="13.2" height="2"/><rect x="702.90" y="780.80" width="9.8" height="2"/><rect x="737.50" y="780.80" width="9.8" height="2"/><rect x="702.90" y="797.30" width="9.8" height="2"/><rect x="737.50" y="797.30" width="9.8" height="2"/><rect x="702.90" y="813.80" width="9.8" height="2"/><rect x="737.50" y="813.80" width="9.8" height="2"/><rect x="699.50" y="830.30" width="13.2" height="2"/><rect x="737.50" y="830.30" width="13.2" height="2"/><rect x="702.90" y="846.80" width="9.8" height="2"/><rect x="737.50" y="846.80" width="9.8" height="2"/><rect x="702.90" y="863.30" width="9.8" height="2"/><rect x="737.50" y="863.30" width="9.8" height="2"/><rect x="702.90" y="879.80" width="9.8" height="2"/><rect x="737.50" y="879.80" width="9.8" height="2"/><rect x="699.50" y="896.30" width="13.2" height="2"/><rect x="737.50" y="896.30" width="13.2" height="2"/></g></svg>
<div class="a" style="left:714.00px;top:793.60px;width:22px;height:42px;box-sizing:border-box;border-radius:9.5px;border:2px solid #979593;background:linear-gradient(to bottom,#3a3b3d,#2c2d2f);box-shadow:0 2px 4px rgba(0,0,0,0.6),0 0 0 1px rgba(0,0,0,0.5);"></div>
<div class="a" style="left:719.30px;top:813.50px;width:11.6px;height:2.2px;background:#959595;"></div>
<div class="a" style="left:693.00px;top:932.50px;width:64.5px;height:2px;background:#0a0a0b;"></div>
<div class="a" style="left:715.40px;top:923.90px;width:19.2px;height:19.2px;box-sizing:border-box;border-radius:50%;border:1.8px solid #9a9a9a;background:linear-gradient(to bottom,#54565a,#3c3e41);box-shadow:0 0 0 1.3px rgba(0,0,0,0.75),0 2px 3px rgba(0,0,0,0.6);"></div>
<div class="t" style="left:690.09px;top:936.50px;font-size:14.13px;color:#9c9c9c;font-weight:bold;transform:scaleX(0.9768);">L</div>
<div class="t" style="left:751.09px;top:936.50px;font-size:14.13px;color:#9c9c9c;font-weight:bold;transform:scaleX(0.8948);">R</div>
<div class="a" style="left:851.70px;top:745.8px;width:17.6px;height:169.5px;border-radius:9px;background:linear-gradient(to right,#2c2d2f,#212123 38%,#212123 62%,#2c2d2f);box-shadow:0 0 0 1px rgba(58,59,62,0.45);"></div>
<div class="a" style="left:859.50px;top:759.3px;width:2px;height:55.30px;background:#060606;"></div>
<div class="a" style="left:859.60px;top:814.6px;width:1.8px;height:88.70px;background:#969696;"></div>
<svg style="left:0;top:0" width="1" height="1"><g fill="#77787a"><rect x="835.00" y="764.30" width="13.2" height="2"/><rect x="873.00" y="764.30" width="13.2" height="2"/><rect x="838.40" y="780.80" width="9.8" height="2"/><rect x="873.00" y="780.80" width="9.8" height="2"/><rect x="838.40" y="797.30" width="9.8" height="2"/><rect x="873.00" y="797.30" width="9.8" height="2"/><rect x="838.40" y="813.80" width="9.8" height="2"/><rect x="873.00" y="813.80" width="9.8" height="2"/><rect x="835.00" y="830.30" width="13.2" height="2"/><rect x="873.00" y="830.30" width="13.2" height="2"/><rect x="838.40" y="846.80" width="9.8" height="2"/><rect x="873.00" y="846.80" width="9.8" height="2"/><rect x="838.40" y="863.30" width="9.8" height="2"/><rect x="873.00" y="863.30" width="9.8" height="2"/><rect x="838.40" y="879.80" width="9.8" height="2"/><rect x="873.00" y="879.80" width="9.8" height="2"/><rect x="835.00" y="896.30" width="13.2" height="2"/><rect x="873.00" y="896.30" width="13.2" height="2"/></g></svg>
<div class="a" style="left:849.50px;top:793.60px;width:22px;height:42px;box-sizing:border-box;border-radius:9.5px;border:2px solid #979593;background:linear-gradient(to bottom,#3a3b3d,#2c2d2f);box-shadow:0 2px 4px rgba(0,0,0,0.6),0 0 0 1px rgba(0,0,0,0.5);"></div>
<div class="a" style="left:854.80px;top:813.50px;width:11.6px;height:2.2px;background:#959595;"></div>
<div class="a" style="left:828.50px;top:932.50px;width:64.5px;height:2px;background:#0a0a0b;"></div>
<div class="a" style="left:850.90px;top:923.90px;width:19.2px;height:19.2px;box-sizing:border-box;border-radius:50%;border:1.8px solid #9a9a9a;background:linear-gradient(to bottom,#54565a,#3c3e41);box-shadow:0 0 0 1.3px rgba(0,0,0,0.75),0 2px 3px rgba(0,0,0,0.6);"></div>
<div class="t" style="left:825.59px;top:936.50px;font-size:14.13px;color:#9c9c9c;font-weight:bold;transform:scaleX(0.9768);">L</div>
<div class="t" style="left:886.59px;top:936.50px;font-size:14.13px;color:#9c9c9c;font-weight:bold;transform:scaleX(0.8948);">R</div>
<div class="a" style="left:950.70px;top:745.8px;width:17.6px;height:169.5px;border-radius:9px;background:linear-gradient(to right,#2c2d2f,#212123 38%,#212123 62%,#2c2d2f);box-shadow:0 0 0 1px rgba(58,59,62,0.45);"></div>
<div class="a" style="left:958.50px;top:759.3px;width:2px;height:53.70px;background:#060606;"></div>
<div class="a" style="left:958.60px;top:813.0px;width:1.8px;height:90.30px;background:#969696;"></div>
<svg style="left:0;top:0" width="1" height="1"><g fill="#77787a"><rect x="934.00" y="764.30" width="13.2" height="2"/><rect x="972.00" y="764.30" width="13.2" height="2"/><rect x="937.40" y="780.80" width="9.8" height="2"/><rect x="972.00" y="780.80" width="9.8" height="2"/><rect x="937.40" y="797.30" width="9.8" height="2"/><rect x="972.00" y="797.30" width="9.8" height="2"/><rect x="937.40" y="813.80" width="9.8" height="2"/><rect x="972.00" y="813.80" width="9.8" height="2"/><rect x="934.00" y="830.30" width="13.2" height="2"/><rect x="972.00" y="830.30" width="13.2" height="2"/><rect x="937.40" y="846.80" width="9.8" height="2"/><rect x="972.00" y="846.80" width="9.8" height="2"/><rect x="937.40" y="863.30" width="9.8" height="2"/><rect x="972.00" y="863.30" width="9.8" height="2"/><rect x="937.40" y="879.80" width="9.8" height="2"/><rect x="972.00" y="879.80" width="9.8" height="2"/><rect x="934.00" y="896.30" width="13.2" height="2"/><rect x="972.00" y="896.30" width="13.2" height="2"/></g></svg>
<div class="a" style="left:948.50px;top:792.00px;width:22px;height:42px;box-sizing:border-box;border-radius:9.5px;border:2px solid #979593;background:linear-gradient(to bottom,#3a3b3d,#2c2d2f);box-shadow:0 2px 4px rgba(0,0,0,0.6),0 0 0 1px rgba(0,0,0,0.5);"></div>
<div class="a" style="left:953.80px;top:811.90px;width:11.6px;height:2.2px;background:#959595;"></div>
<div class="a" style="left:927.50px;top:932.50px;width:64.5px;height:2px;background:#0a0a0b;"></div>
<div class="a" style="left:949.90px;top:923.90px;width:19.2px;height:19.2px;box-sizing:border-box;border-radius:50%;border:1.8px solid #9a9a9a;background:linear-gradient(to bottom,#54565a,#3c3e41);box-shadow:0 0 0 1.3px rgba(0,0,0,0.75),0 2px 3px rgba(0,0,0,0.6);"></div>
<div class="t" style="left:924.59px;top:936.50px;font-size:14.13px;color:#9c9c9c;font-weight:bold;transform:scaleX(0.9768);">L</div>
<div class="t" style="left:985.59px;top:936.50px;font-size:14.13px;color:#9c9c9c;font-weight:bold;transform:scaleX(0.8948);">R</div>
<div class="a" style="left:1049.70px;top:745.8px;width:17.6px;height:169.5px;border-radius:9px;background:linear-gradient(to right,#2c2d2f,#212123 38%,#212123 62%,#2c2d2f);box-shadow:0 0 0 1px rgba(58,59,62,0.45);"></div>
<div class="a" style="left:1057.50px;top:759.3px;width:2px;height:55.30px;background:#060606;"></div>
<div class="a" style="left:1057.60px;top:814.6px;width:1.8px;height:88.70px;background:#969696;"></div>
<svg style="left:0;top:0" width="1" height="1"><g fill="#77787a"><rect x="1033.00" y="764.30" width="13.2" height="2"/><rect x="1071.00" y="764.30" width="13.2" height="2"/><rect x="1036.40" y="780.80" width="9.8" height="2"/><rect x="1071.00" y="780.80" width="9.8" height="2"/><rect x="1036.40" y="797.30" width="9.8" height="2"/><rect x="1071.00" y="797.30" width="9.8" height="2"/><rect x="1036.40" y="813.80" width="9.8" height="2"/><rect x="1071.00" y="813.80" width="9.8" height="2"/><rect x="1033.00" y="830.30" width="13.2" height="2"/><rect x="1071.00" y="830.30" width="13.2" height="2"/><rect x="1036.40" y="846.80" width="9.8" height="2"/><rect x="1071.00" y="846.80" width="9.8" height="2"/><rect x="1036.40" y="863.30" width="9.8" height="2"/><rect x="1071.00" y="863.30" width="9.8" height="2"/><rect x="1036.40" y="879.80" width="9.8" height="2"/><rect x="1071.00" y="879.80" width="9.8" height="2"/><rect x="1033.00" y="896.30" width="13.2" height="2"/><rect x="1071.00" y="896.30" width="13.2" height="2"/></g></svg>
<div class="a" style="left:1047.50px;top:793.60px;width:22px;height:42px;box-sizing:border-box;border-radius:9.5px;border:2px solid #979593;background:linear-gradient(to bottom,#3a3b3d,#2c2d2f);box-shadow:0 2px 4px rgba(0,0,0,0.6),0 0 0 1px rgba(0,0,0,0.5);"></div>
<div class="a" style="left:1052.80px;top:813.50px;width:11.6px;height:2.2px;background:#959595;"></div>
<div class="a" style="left:1026.50px;top:932.50px;width:64.5px;height:2px;background:#0a0a0b;"></div>
<div class="a" style="left:1038.60px;top:923.90px;width:19.2px;height:19.2px;box-sizing:border-box;border-radius:50%;border:1.8px solid #9a9a9a;background:linear-gradient(to bottom,#54565a,#3c3e41);box-shadow:0 0 0 1.3px rgba(0,0,0,0.75),0 2px 3px rgba(0,0,0,0.6);"></div>
<div class="t" style="left:1023.59px;top:936.50px;font-size:14.13px;color:#9c9c9c;font-weight:bold;transform:scaleX(0.9768);">L</div>
<div class="t" style="left:1084.59px;top:936.50px;font-size:14.13px;color:#9c9c9c;font-weight:bold;transform:scaleX(0.8948);">R</div>
<div class="a" style="left:1184.90px;top:701.6px;width:17.6px;height:237.89999999999998px;border-radius:9px;background:linear-gradient(to right,#2c2d2f,#212123 38%,#212123 62%,#2c2d2f);box-shadow:0 0 0 1px rgba(58,59,62,0.45);"></div>
<div class="a" style="left:1192.70px;top:715.1px;width:2px;height:86.50px;background:#060606;"></div>
<div class="a" style="left:1192.80px;top:801.6px;width:1.8px;height:125.90px;background:#969696;"></div>
<svg style="left:0;top:0" width="1" height="1"><g fill="#77787a"><rect x="1168.20" y="721.50" width="13.2" height="2"/><rect x="1206.20" y="721.50" width="13.2" height="2"/><rect x="1171.60" y="738.00" width="9.8" height="2"/><rect x="1206.20" y="738.00" width="9.8" height="2"/><rect x="1171.60" y="754.50" width="9.8" height="2"/><rect x="1206.20" y="754.50" width="9.8" height="2"/><rect x="1171.60" y="771.00" width="9.8" height="2"/><rect x="1206.20" y="771.00" width="9.8" height="2"/><rect x="1171.60" y="787.50" width="9.8" height="2"/><rect x="1206.20" y="787.50" width="9.8" height="2"/><rect x="1171.60" y="804.00" width="9.8" height="2"/><rect x="1206.20" y="804.00" width="9.8" height="2"/><rect x="1168.20" y="820.50" width="13.2" height="2"/><rect x="1206.20" y="820.50" width="13.2" height="2"/><rect x="1171.60" y="837.00" width="9.8" height="2"/><rect x="1206.20" y="837.00" width="9.8" height="2"/><rect x="1171.60" y="853.50" width="9.8" height="2"/><rect x="1206.20" y="853.50" width="9.8" height="2"/><rect x="1171.60" y="870.00" width="9.8" height="2"/><rect x="1206.20" y="870.00" width="9.8" height="2"/><rect x="1171.60" y="886.50" width="9.8" height="2"/><rect x="1206.20" y="886.50" width="9.8" height="2"/><rect x="1171.60" y="903.00" width="9.8" height="2"/><rect x="1206.20" y="903.00" width="9.8" height="2"/><rect x="1168.20" y="919.50" width="13.2" height="2"/><rect x="1206.20" y="919.50" width="13.2" height="2"/></g></svg>
<div class="a" style="left:1182.70px;top:780.60px;width:22px;height:42px;box-sizing:border-box;border-radius:9.5px;border:2px solid #979593;background:linear-gradient(to bottom,#3a3b3d,#2c2d2f);box-shadow:0 2px 4px rgba(0,0,0,0.6),0 0 0 1px rgba(0,0,0,0.5);"></div>
<div class="a" style="left:1188.00px;top:800.50px;width:11.6px;height:2.2px;background:#959595;"></div>
<div class="a" style="left:1284.20px;top:701.6px;width:17.6px;height:237.89999999999998px;border-radius:9px;background:linear-gradient(to right,#2c2d2f,#212123 38%,#212123 62%,#2c2d2f);box-shadow:0 0 0 1px rgba(58,59,62,0.45);"></div>
<div class="a" style="left:1292.00px;top:715.1px;width:2px;height:86.50px;background:#060606;"></div>
<div class="a" style="left:1292.10px;top:801.6px;width:1.8px;height:125.90px;background:#969696;"></div>
<svg style="left:0;top:0" width="1" height="1"><g fill="#77787a"><rect x="1267.50" y="721.50" width="13.2" height="2"/><rect x="1305.50" y="721.50" width="13.2" height="2"/><rect x="1270.90" y="738.00" width="9.8" height="2"/><rect x="1305.50" y="738.00" width="9.8" height="2"/><rect x="1270.90" y="754.50" width="9.8" height="2"/><rect x="1305.50" y="754.50" width="9.8" height="2"/><rect x="1270.90" y="771.00" width="9.8" height="2"/><rect x="1305.50" y="771.00" width="9.8" height="2"/><rect x="1270.90" y="787.50" width="9.8" height="2"/><rect x="1305.50" y="787.50" width="9.8" height="2"/><rect x="1270.90" y="804.00" width="9.8" height="2"/><rect x="1305.50" y="804.00" width="9.8" height="2"/><rect x="1267.50" y="820.50" width="13.2" height="2"/><rect x="1305.50" y="820.50" width="13.2" height="2"/><rect x="1270.90" y="837.00" width="9.8" height="2"/><rect x="1305.50" y="837.00" width="9.8" height="2"/><rect x="1270.90" y="853.50" width="9.8" height="2"/><rect x="1305.50" y="853.50" width="9.8" height="2"/><rect x="1270.90" y="870.00" width="9.8" height="2"/><rect x="1305.50" y="870.00" width="9.8" height="2"/><rect x="1270.90" y="886.50" width="9.8" height="2"/><rect x="1305.50" y="886.50" width="9.8" height="2"/><rect x="1270.90" y="903.00" width="9.8" height="2"/><rect x="1305.50" y="903.00" width="9.8" height="2"/><rect x="1267.50" y="919.50" width="13.2" height="2"/><rect x="1305.50" y="919.50" width="13.2" height="2"/></g></svg>
<div class="a" style="left:1282.00px;top:780.60px;width:22px;height:42px;box-sizing:border-box;border-radius:9.5px;border:2px solid #979593;background:linear-gradient(to bottom,#3a3b3d,#2c2d2f);box-shadow:0 2px 4px rgba(0,0,0,0.6),0 0 0 1px rgba(0,0,0,0.5);"></div>
<div class="a" style="left:1287.30px;top:800.50px;width:11.6px;height:2.2px;background:#959595;"></div>
<div class="a" style="left:1383.20px;top:701.6px;width:17.6px;height:237.89999999999998px;border-radius:9px;background:linear-gradient(to right,#2c2d2f,#212123 38%,#212123 62%,#2c2d2f);box-shadow:0 0 0 1px rgba(58,59,62,0.45);"></div>
<div class="a" style="left:1391.00px;top:715.1px;width:2px;height:86.50px;background:#060606;"></div>
<div class="a" style="left:1391.10px;top:801.6px;width:1.8px;height:125.90px;background:#969696;"></div>
<svg style="left:0;top:0" width="1" height="1"><g fill="#77787a"><rect x="1366.50" y="721.50" width="13.2" height="2"/><rect x="1404.50" y="721.50" width="13.2" height="2"/><rect x="1369.90" y="738.00" width="9.8" height="2"/><rect x="1404.50" y="738.00" width="9.8" height="2"/><rect x="1369.90" y="754.50" width="9.8" height="2"/><rect x="1404.50" y="754.50" width="9.8" height="2"/><rect x="1369.90" y="771.00" width="9.8" height="2"/><rect x="1404.50" y="771.00" width="9.8" height="2"/><rect x="1369.90" y="787.50" width="9.8" height="2"/><rect x="1404.50" y="787.50" width="9.8" height="2"/><rect x="1369.90" y="804.00" width="9.8" height="2"/><rect x="1404.50" y="804.00" width="9.8" height="2"/><rect x="1366.50" y="820.50" width="13.2" height="2"/><rect x="1404.50" y="820.50" width="13.2" height="2"/><rect x="1369.90" y="837.00" width="9.8" height="2"/><rect x="1404.50" y="837.00" width="9.8" height="2"/><rect x="1369.90" y="853.50" width="9.8" height="2"/><rect x="1404.50" y="853.50" width="9.8" height="2"/><rect x="1369.90" y="870.00" width="9.8" height="2"/><rect x="1404.50" y="870.00" width="9.8" height="2"/><rect x="1369.90" y="886.50" width="9.8" height="2"/><rect x="1404.50" y="886.50" width="9.8" height="2"/><rect x="1369.90" y="903.00" width="9.8" height="2"/><rect x="1404.50" y="903.00" width="9.8" height="2"/><rect x="1366.50" y="919.50" width="13.2" height="2"/><rect x="1404.50" y="919.50" width="13.2" height="2"/></g></svg>
<div class="a" style="left:1381.00px;top:780.60px;width:22px;height:42px;box-sizing:border-box;border-radius:9.5px;border:2px solid #979593;background:linear-gradient(to bottom,#3a3b3d,#2c2d2f);box-shadow:0 2px 4px rgba(0,0,0,0.6),0 0 0 1px rgba(0,0,0,0.5);"></div>
<div class="a" style="left:1386.30px;top:800.50px;width:11.6px;height:2.2px;background:#959595;"></div>
</body></html>
